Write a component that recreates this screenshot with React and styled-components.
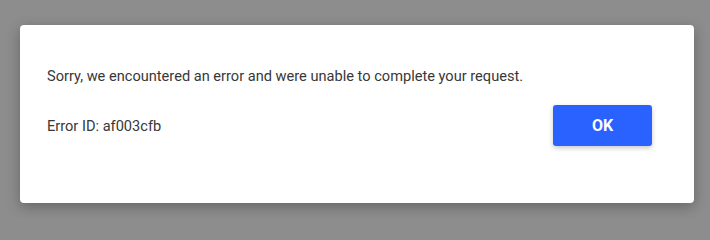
import React from "react"
import styled, { createGlobalStyle } from "styled-components"

const GlobalStyle = createGlobalStyle`
html, body {
    margin:0;
    padding:0;
    height:219px;
    background:#8d8d8d;
    font-family:Roboto, "Liberation Sans", sans-serif;
    overflow:hidden;
}
`

const App = () => {
    return (
        <>
            <GlobalStyle />
            <Overlay>
                <Dialog role="alertdialog">
                    <Message>
                        Sorry, we encountered an error and were unable to complete your request.
                    </Message>
                    <Row>
                        <ErrorId>Error ID: af003cfb</ErrorId>
                        <Button type="button">OK</Button>
                    </Row>
                </Dialog>
            </Overlay>
        </>
    )
}

const Overlay = styled.div`
width:710px;
height:219px;
box-sizing:border-box;
padding:25px 16px 0 20px;
`
const Dialog = styled.div`
width:674px;
height:178px;
box-sizing:border-box;
background:#FFFFFF;
border-radius:4px;
box-shadow:0 4px 14px rgba(0,0,0,0.28);
padding:41px 42px 0 27px;
`
const Message = styled.p`
margin:0;
font-size:14.6px;
line-height:20px;
color:#383838;
`
const Row = styled.div`
display:flex;
justify-content:space-between;
align-items:center;
margin-top:19px;
`
const ErrorId = styled.span`
font-size:14.6px;
line-height:20px;
color:#383838;
`
const Button = styled.button`
width:99px;
height:41px;
border:none;
border-radius:3px;
background:#2962FF;
color:#FFFFFF;
font-family:Roboto, "Liberation Sans", sans-serif;
font-size:16px;
font-weight:700;
box-shadow:0 2px 5px rgba(0,0,0,0.22);
cursor:pointer;
`

export default App
